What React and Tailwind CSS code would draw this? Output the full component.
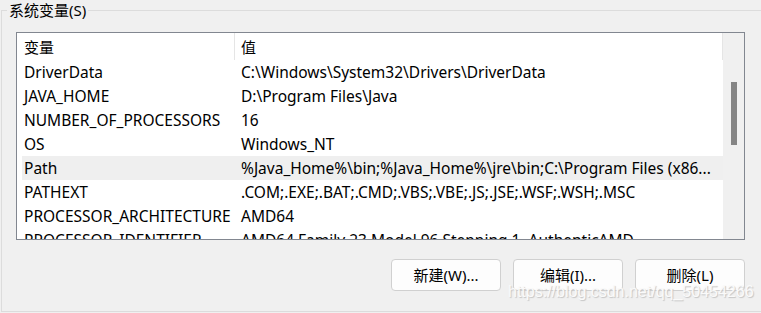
import React from "react";

const rows = [
  ["DriverData", "C:\\Windows\\System32\\Drivers\\DriverData"],
  ["JAVA_HOME", "D:\\Program Files\\Java"],
  ["NUMBER_OF_PROCESSORS", "16"],
  ["OS", "Windows_NT"],
  ["Path", "%Java_Home%\\bin;%Java_Home%\\jre\\bin;C:\\Program Files (x86..."],
  ["PATHEXT", ".COM;.EXE;.BAT;.CMD;.VBS;.VBE;.JS;.JSE;.WSF;.WSH;.MSC"],
  ["PROCESSOR_ARCHITECTURE", "AMD64"],
  ["PROCESSOR_IDENTIFIER", "AMD64 Family 23 Model 96 Stepping 1, AuthenticAMD"],
];

const font = { fontFamily: '"Noto Sans", "Noto Sans CJK SC", sans-serif' };

export default function App() {
  return (
    <div
      className="relative w-[761px] h-[313px] overflow-hidden bg-[#f0f0f0] text-black text-[15px] leading-[20px]"
      style={font}
    >
      <fieldset className="ml-[1px] w-[780px] h-[312px] border-t border-l border-b border-[#dcdcdc] m-0 p-0">
        <legend className="ml-[5px] px-[2px] h-[20px] leading-[20px]">系统变量(S)</legend>
        <div className="ml-[14px] mt-[12px] w-[729px] h-[208px] border border-[#828790] bg-white flex">
          <div className="w-[706px] h-full overflow-hidden flex flex-col">
            <div className="h-[27px] shrink-0 flex items-center">
              <div className="w-[217px] pl-[7px] h-full flex items-center">变量</div>
              <div className="w-px h-full bg-[#e5e5e5]" />
              <div className="flex-1 pl-[6px] h-full flex items-center">值</div>
              <div className="w-px h-full bg-[#e5e5e5]" />
            </div>
            {rows.map(([k, v]) => (
              <div
                key={k}
                className={
                  "h-[24px] shrink-0 flex items-center whitespace-nowrap ml-[5px] text-[15.5px] " +
                  (k === "Path" ? "bg-[#efefef]" : "")
                }
              >
                <div className="w-[213px] pl-[2px] overflow-hidden">{k}</div>
                <div className="flex-1 pl-[6px] overflow-hidden">{v}</div>
              </div>
            ))}
          </div>
          <div className="w-[21px] h-full bg-[#f0f0f0] flex justify-center pt-[49px]">
            <div className="w-[6px] h-[63px] bg-[#858585]" />
          </div>
        </div>
        <div className="ml-[14px] mt-[19px] w-[729px] flex justify-end gap-3">
          <button className="w-[110px] h-[32px] rounded-[4px] border border-[#d0d0d0] bg-[#fdfdfd]">新建(W)...</button>
          <button className="w-[110px] h-[32px] rounded-[4px] border border-[#d0d0d0] bg-[#fdfdfd]">编辑(I)...</button>
          <button className="w-[110px] h-[32px] rounded-[4px] border border-[#d0d0d0] bg-[#fdfdfd]">删除(L)</button>
        </div>
      </fieldset>
      <div
        className="absolute left-[508px] top-[282px] text-[16px] leading-[20px] text-[#fafafa] whitespace-nowrap [text-shadow:1px_1px_1px_#c4c4c4]"
        style={{ fontFamily: '"Liberation Sans", Arial, sans-serif' }}
      >
        https://blog.csdn.net/qq_50454266
      </div>
    </div>
  );
}
